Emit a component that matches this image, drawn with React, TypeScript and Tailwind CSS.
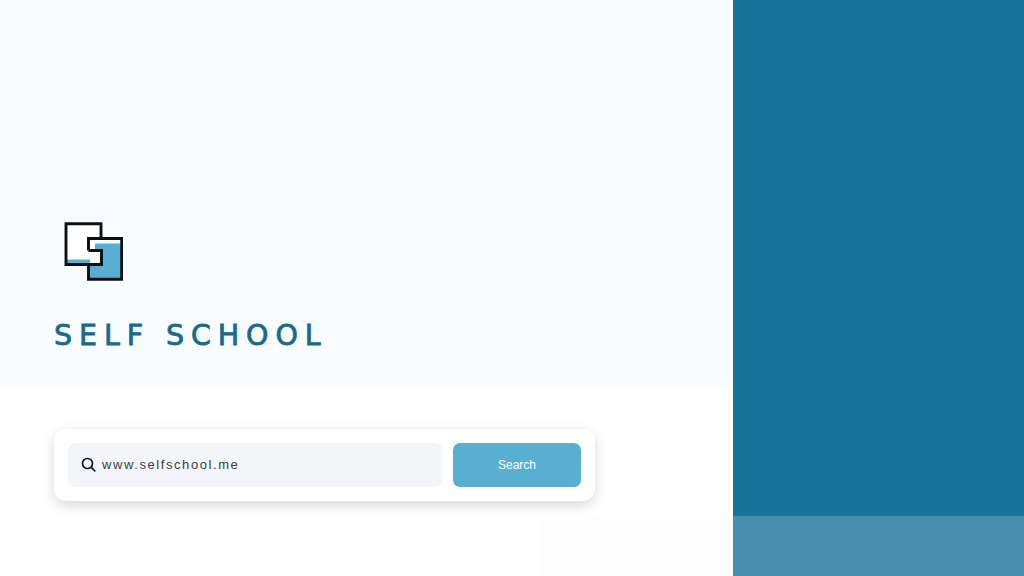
import React from "react";

function Logo() {
  return (
    <svg width="60" height="60" viewBox="63 221 60 60" className="block">
      <rect x="67" y="224" width="34" height="40" fill="#ffffff" />
      <rect x="67" y="259.5" width="33" height="5" fill="#58afd2" />
      <rect x="95" y="252" width="6" height="12" fill="#58afd2" />
      <rect x="90" y="240" width="31" height="38" fill="#ffffff" />
      <path d="M95 243.5H121V278.5H89.5V264.5H101V251H95Z" fill="#58afd2" />
      <path
        d="M88.5 250.5V238.5H121.7V279.2H88.5V264.5M101 238.5V223.8H66V264.5H101.5V250.5H88.5"
        fill="none"
        stroke="#0b0f12"
        strokeWidth="2.9"
      />
    </svg>
  );
}

function SearchIcon() {
  return (
    <svg width="16" height="16" viewBox="0 0 16 16" fill="none" stroke="#111827" strokeWidth="1.7" strokeLinecap="round" className="shrink-0">
      <circle cx="6.5" cy="6.5" r="5" />
      <path d="M10.3 10.3L13.8 13.8" />
    </svg>
  );
}

export default function App() {
  return (
    <div className="flex w-[1024px] h-[576px] overflow-hidden bg-white font-['Inter','Liberation_Sans',sans-serif]">
      <main className="w-[733px] flex flex-col">
        <section className="h-[387px] bg-[#f8fbff] pl-[54px] pt-[221px]">
          <div className="pl-[9px]">
            <Logo />
          </div>
          <h1 className="mt-[38px] text-[28.5px] leading-[34px] font-normal tracking-[6.9px] text-[#176a8f] whitespace-nowrap font-['DejaVu_Sans',sans-serif] [-webkit-text-stroke:0.8px_#176a8f]">
            SELF SCHOOL
          </h1>
        </section>
        <div className="ml-[54px] mt-[42px] w-[541px] h-[72px] rounded-xl bg-white p-[14px] flex gap-[10px] shadow-[0_4px_14px_rgba(0,0,0,0.16)]">
          <div className="w-[375px] h-[44px] rounded-lg bg-[#f3f5f9] flex items-center pl-[13px] gap-[5px]">
            <SearchIcon />
            <span className="text-[13px] tracking-[1.58px] text-[#3a3e44] font-['Liberation_Sans',sans-serif]">www.selfschool.me</span>
          </div>
          <button className="w-[128px] h-[44px] rounded-[7px] bg-[#58afd2] text-white text-[12px] font-['Liberation_Sans',sans-serif]">
            Search
          </button>
        </div>
        <div className="mt-[15px] ml-auto w-[193px] h-[60px] bg-[#fdfdfd]" />
      </main>
      <aside className="flex-1 flex flex-col">
        <div className="h-[516px] bg-[#18749a]" />
        <div className="flex-1 bg-[#468eae]" />
      </aside>
    </div>
  );
}
